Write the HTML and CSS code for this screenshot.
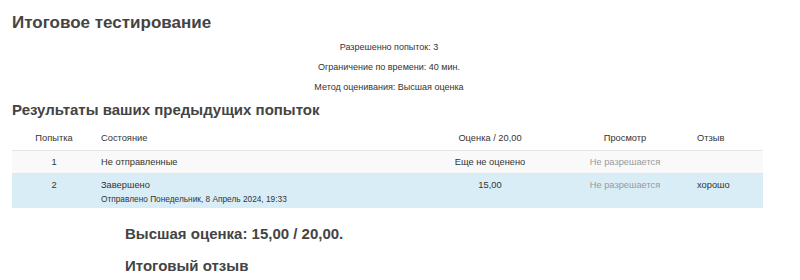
FILE: index.html
```html
<!DOCTYPE html>
<html>
<head>
    <meta charset="UTF-8">
    <title>Итоговое тестирование</title>
    <link rel="stylesheet" href="styles.css">
</head>
<body>
<h1>Итоговое тестирование</h1>

<div class="quiz-info">
    <p>Разрешенно попыток: 3</p>
    <p>Ограничение по времени: 40 мин.</p>
    <p>Метод оценивания: Высшая оценка</p>
</div>

<h2>Результаты ваших предыдущих попыток</h2>

<table class="attempts">
    <colgroup>
        <col class="w-num">
        <col class="w-state">
        <col class="w-grade">
        <col class="w-review">
        <col class="w-feedback">
    </colgroup>
    <thead>
        <tr>
            <th>Попытка</th>
            <th class="left">Состояние</th>
            <th>Оценка / 20,00</th>
            <th>Просмотр</th>
            <th class="left">Отзыв</th>
        </tr>
    </thead>
    <tbody>
        <tr class="odd">
            <td>1</td>
            <td class="left">Не отправленные</td>
            <td>Еще не оценено</td>
            <td class="muted">Не разрешается</td>
            <td class="left"></td>
        </tr>
        <tr class="best">
            <td>2</td>
            <td class="left">Завершено<span class="submitted">Отправлено Понедельник, 8 Апрель 2024, 19:33</span></td>
            <td>15,00</td>
            <td class="muted">Не разрешается</td>
            <td class="left">хорошо</td>
        </tr>
    </tbody>
</table>

<div class="summary">
    <h3>Высшая оценка: 15,00 / 20,00.</h3>
    <h3>Итоговый отзыв</h3>
</div>
</body>
</html>
```

FILE: styles.css
```css
:root {
    --text-color: #333;
    --heading-color: #444;
    --muted-color: #999;
    --stripe-color: #f9f9f9;
    --best-color: #d9edf7;
    --border-color: #e6e6e6;
}

body {
    font-family: "Liberation Sans", Arial, sans-serif;
    color: var(--text-color);
    margin: 0;
    padding: 11px 12px 0;
    font-size: 9px;
}

h1 {
    color: var(--heading-color);
    font-size: 17px;
    font-weight: bold;
    margin: 0 0 2px;
    line-height: 24px;
}

.quiz-info {
    text-align: center;
    width: 754px;
}

.quiz-info p {
    margin: 0;
    line-height: 20px;
}

h2 {
    color: var(--heading-color);
    font-size: 15px;
    margin: 1px 0 0;
    line-height: 24px;
}

.attempts {
    width: 751px;
    table-layout: fixed;
    border-collapse: collapse;
    margin-top: 4px;
    font-size: 9.3px;
}

.w-num { width: 84px; }
.w-state { width: 326px; }
.w-grade { width: 136px; }
.w-review { width: 134px; }
.w-feedback { width: 71px; }

.attempts th,
.attempts td {
    padding: 4px 5px;
    line-height: 14px;
    vertical-align: top;
    text-align: center;
}

.attempts th {
    font-weight: normal;
    padding-top: 5px;
    padding-bottom: 5px;
}

.attempts .left { text-align: left; }

.attempts tbody tr {
    border-top: 1px solid var(--border-color);
}

.odd { background-color: var(--stripe-color); }
.best { background-color: var(--best-color); }

.best td { padding-bottom: 2px; }

.muted { color: var(--muted-color); }

.submitted {
    display: block;
    font-size: 8.3px;
}

.summary {
    padding-left: 113px;
    margin-top: 16px;
}

.summary h3 {
    color: var(--heading-color);
    font-size: 15px;
    margin: 0 0 12px;
    line-height: 20px;
}
```
